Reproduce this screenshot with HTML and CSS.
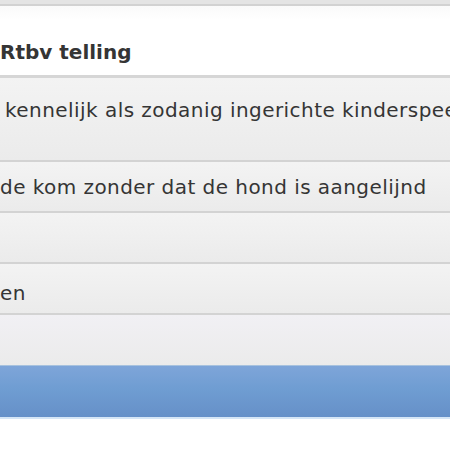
FILE: index.html
```html
<!DOCTYPE html>
<html lang="nl">
<head>
<meta charset="utf-8">
<title>Rtbv telling</title>
<link rel="stylesheet" href="styles.css">
</head>
<body>
  <div class="page">
    <div class="topbar"></div>
    <header class="title-bar">
      <h1 class="title">Rtbv telling</h1>
    </header>
    <ul class="items">
      <li class="item item-tall"><span class="label label-first">kennelijk als zodanig ingerichte kinderspeelplaats</span></li>
      <li class="item"><span class="label">de kom zonder dat de hond is aangelijnd</span></li>
      <li class="item"></li>
      <li class="item"><span class="label label-low">en</span></li>
      <li class="item item-light"></li>
    </ul>
    <div class="action-bar"></div>
  </div>
</body>
</html>
```

FILE: styles.css
```css
html, body {
  margin: 0;
  padding: 0;
  background: #ffffff;
}

.page {
  width: 450px;
  height: 450px;
  overflow: hidden;
  font-family: "DejaVu Sans", Verdana, sans-serif;
  color: #333333;
}

.topbar {
  height: 4px;
  background: #e4e4e4;
  border-bottom: 2px solid #d2d2d2;
}

.title-bar {
  height: 69px;
  background: linear-gradient(#fafafa, #ffffff 20%, #ffffff);
  border-bottom: 3px solid #d6d6d6;
  display: flex;
  align-items: flex-end;
}

.title {
  margin: 0 0 11px 0;
  font-size: 20px;
  font-weight: bold;
  color: #353535;
  letter-spacing: 0;
}

.items {
  list-style: none;
  margin: 0;
  padding: 0;
}

.item {
  height: 49px;
  background: linear-gradient(#f3f3f3, #ebebeb);
  border-bottom: 2px solid #d3d3d3;
  display: flex;
  align-items: center;
  white-space: nowrap;
  overflow: hidden;
}

.item-tall {
  height: 82px;
  align-items: flex-start;
}

.item-light {
  background: linear-gradient(#f1f0f4, #ebebeb);
  border-bottom: none;
  height: 50px;
}

.label {
  font-size: 20px;
  color: #353535;
  letter-spacing: 0.45px;
}

.label-first {
  margin: 20px 0 0 5px;
}

.label-low {
  margin-top: 8px;
}

.action-bar {
  height: 51px;
  background: linear-gradient(#7ea5d9, #6f9dd2 45%, #6690c8);
  border-top: 1px solid #a7c2de;
  border-bottom: 2px solid #d6e6f6;
}
```
